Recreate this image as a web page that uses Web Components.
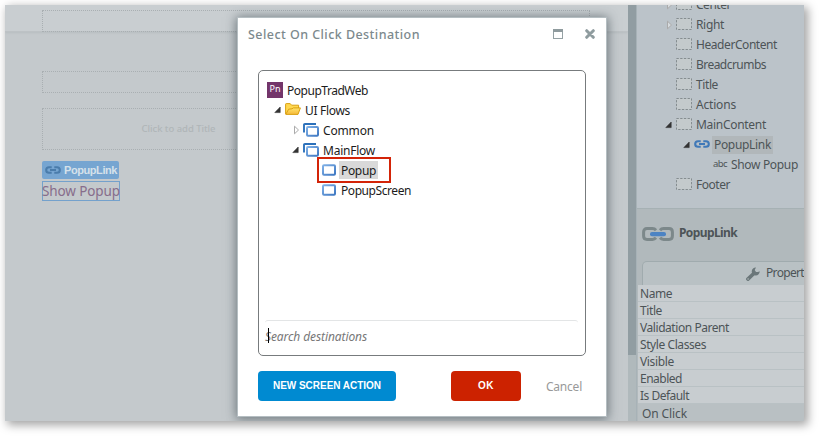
<!DOCTYPE html>
<html lang="en"><head><meta charset="utf-8"><title>Select On Click Destination</title>
<style>html,body{margin:0;background:#fff}body{width:819px;height:436px;overflow:hidden;font-family:"Noto Sans","Open Sans",sans-serif;font-size:12px;color:#1c1c1c}</style></head>
<body><app-shot></app-shot>
<script>
const def=(name,html,after)=>customElements.define(name,class extends HTMLElement{
  constructor(){super();this.attachShadow({mode:'open'})}
  connectedCallback(){this.shadowRoot.innerHTML=typeof html==='function'?html(this):html;if(after)after(this)}
});

/* single line of text tracked to a given width */
def('fit-text','<style>:host{display:inline-block;white-space:pre;line-height:20px;flex:none}span{display:inline-block}</style><span><slot></slot></span>',el=>{
  const s=el.shadowRoot.querySelector('span'),w=+el.getAttribute('w');
  if(w){const n=el.textContent.length;s.style.letterSpacing=((w-s.getBoundingClientRect().width)/n)+'px'}
});

const grad='<defs><linearGradient id="g" x1="0" y1="0" x2="1" y2="1"><stop offset="0" stop-color="#7fb0e6"/><stop offset="1" stop-color="#3f78c2"/></linearGradient><linearGradient id="f" x1="0" y1="0" x2="0" y2="1"><stop offset="0" stop-color="#ffe36b"/><stop offset="1" stop-color="#f6b93a"/></linearGradient></defs>';
const icons={
 open:[8,8,'<path d="M6.2 1v5.6H.8z" fill="#333" stroke="#333" stroke-width=".6"/>'],
 shut:[8,10,'<path d="M2.5 1.2v7.6L6.5 5z" fill="#fff" fill-opacity=".4" stroke="#aaa"/>'],
 folder:[16,12,'<path d="M.6 11V1.2Q.6.6 1.2.6H5.2L6.6 2.2H13.6V5" fill="#ffd84f" stroke="#d9a013"/><path d="M.8 11.4 3.6 6.2 7 5.8 8.4 4.9H15.4L13 11.4Z" fill="url(#f)" stroke="#d9a013"/>'],
 flow:[16,14,'<path d="M1 9.5V2Q1 1 2 1H13" fill="none" stroke="#2c71bb" stroke-width="1.9"/><rect x="4" y="4" width="11" height="8.8" rx="1" fill="#fff" stroke="url(#g)" stroke-width="2"/>'],
 screen:[14,12,'<rect x="1" y="1.2" width="12" height="9.6" rx="1" fill="#fff" stroke="url(#g)" stroke-width="2"/>'],
 holder:[16,12,'<rect x=".5" y=".5" width="15" height="11" fill="#c4cacc" stroke="#858d90" stroke-dasharray="2.3 1.4"/>'],
 link:[16,8,'<path d="M6.7 1.2H4Q1.2 1.2 1.2 4T4 6.8H6.7M9.3 1.2H12Q14.8 1.2 14.8 4T12 6.8H9.3M5 4H11" fill="none" stroke="currentColor" stroke-width="2.1"/>'],
 biglink:[32,14,'<path d="M14 3.2Q12.6 1.6 10.5 1.6H5Q1.6 1.6 1.6 5V9Q1.6 12.4 5 12.4H10.5Q12.6 12.4 14 10.8M18 3.2Q19.4 1.6 21.5 1.6H27Q30.4 1.6 30.4 5V9Q30.4 12.4 27 12.4H21.5Q19.4 12.4 18 10.8" fill="none" stroke="#7c888a" stroke-width="3"/><rect x="8" y="5" width="16" height="4.2" rx="2" fill="#4c83c3"/>'],
 wrench:[14,14,'<path d="M1.9 12.1 8 6.2" stroke="#6b777a" stroke-width="3.6" stroke-linecap="round"/><path d="M13.7 4.2A4 4 0 1 1 10 .4L8.7 3 10 4.9 12 5Z" fill="#6b777a"/><circle cx="2.1" cy="12" r=".7" fill="#b8c0c2"/>'],
 max:[10,10,'<rect x=".5" y=".5" width="9" height="9" fill="#fff" stroke="#95a1a4"/><path d="M0 0H10V3H0Z" fill="#8f9b9e"/>'],
 close:[10,10,'<path d="M1.7 1.7 8.3 8.3M8.3 1.7 1.7 8.3" stroke="#8f9c9f" stroke-width="3" stroke-linecap="round"/>']
};
def('ui-icon',el=>{const [w,h,b]=icons[el.getAttribute('name')];
 return `<style>:host{display:block;flex:none;width:${w}px;height:${h}px}svg{display:block}</style><svg width="${w}" height="${h}" viewBox="0 0 ${w} ${h}">${grad}${b}</svg>`});

/* a tree line: arrow, icon, label */
def('tree-row',el=>{const a=n=>el.getAttribute(n);const icon=a('icon');
 const ic=icon==='pn'?'<b class="pn">Pn</b>':icon==='abc'?'<fit-text class="abc" w="14">abc</fit-text>':`<ui-icon class="ic" name="${icon}"></ui-icon>`;
 return `<style>:host{display:flex;align-items:center;height:20px;padding-left:${a('x')}px}
 .arrow{width:11px;display:flex;align-items:center;justify-content:flex-start}
 .arrow ui-icon{margin-top:-1px}
 .pn{width:16px;height:16px;background:#73356a;color:#fff;font:9px/14px "Noto Sans",sans-serif;text-align:center}
 .abc{font-size:9.5px;line-height:18px;align-self:flex-start}
 .ic{color:#4079b8;margin-top:-2px}
 .ic[name="flow"]{margin-top:-1px}.ic[name="screen"]{margin-top:-1px}
 .lab{margin-left:${a('gap')||4}px;padding:0 2px;margin-right:-2px;height:18px;line-height:18px;${a('sel')?'background:'+a('sel'):''}}
 .lab fit-text{line-height:var(--label-line,19px);vertical-align:top}</style>
 ${a('arrow')!==null?`<span class="arrow"><ui-icon name="${a('arrow')}"></ui-icon></span>`:''}${ic}<span class="lab"><fit-text w="${a('w')}">${a('label')}</fit-text></span>`});

def('drop-zone','<style>:host{display:flex;box-sizing:border-box;border:1px dotted #a9afb2;width:548px;justify-content:center;align-items:center}</style><slot></slot>');

def('page-canvas',`<style>:host{display:flex;flex-direction:column;width:623px;height:416px;background:#c4c9cc;box-sizing:border-box}
header{background:#c9ced1;border-bottom:1px solid #bdc2c5;padding:5px 0 0 37px;height:21px;box-shadow:0 1px 2px #b8bdc0}
main{padding:39px 0 0 37px;display:flex;flex-direction:column;align-items:flex-start}
.h{height:22px}.t{height:42px;margin-top:15px;color:#b0b6b8;font-size:9.5px;padding-right:275px;font-weight:500}
.tag{display:flex;align-items:center;width:77px;height:18px;border-radius:2px;background:#76a5d1;margin-top:11px;color:#d5e1ea;font:bold 11px "Liberation Sans",sans-serif}
.tag ui-icon{color:#4a7cab;margin:0 3px}
.a{height:20px;width:78px;box-sizing:border-box;border:1px solid #74a1cc;margin-top:2px;color:#876d8b;font-size:13.5px;line-height:18px}
.a fit-text{line-height:18px;vertical-align:top;margin-left:-1px}</style>
<header><drop-zone class="h"></drop-zone></header><main><drop-zone class="h"></drop-zone><drop-zone class="t"><fit-text w="74">Click to add Title</fit-text></drop-zone>
<div class="tag"><ui-icon name="link"></ui-icon><fit-text w="53">PopupLink</fit-text></div><div class="a"><fit-text w="78">Show Popup</fit-text></div></main>`);

def('scroll-strip','<style>:host{display:block;width:8px;height:416px;background:#b0b9bc;flex:none}div{height:350px;background:#919da2}</style><div></div>');

def('prop-row',el=>`<style>:host{display:block;height:16px;border-bottom:1px solid #b9c1c4;background:#c8cdd0;padding-left:2px}:host([last]){background:#b9c0c3;padding-left:4px;height:18px;border:0}fit-text{line-height:17px;vertical-align:top}:host([last]) fit-text{line-height:19px}</style><fit-text w="${el.getAttribute('w')}">${el.getAttribute('label')}</fit-text>`);

def('side-panel',`<style>:host{display:block;width:168px;height:416px;overflow:hidden;background:#b1b9bc;color:#4d5457;border-left:1px solid #a7b2b7;box-sizing:border-box;flex:none}
.tree{--label-line:17px;height:203px;background:#bbc3c9;border-bottom:1px solid #a6b1b4;overflow:hidden}.tree tree-row:first-child{margin-top:-10px}
.name{display:flex;align-items:center;height:52px;padding-left:5px;gap:5px;font-weight:700}.name fit-text{margin-top:-4px}.name ui-icon{margin-top:-2px}
.tab{margin-left:5px;width:200px;height:23px;border:1px solid #a0abae;border-bottom:0;border-radius:5px 0 0 0;background:#b9c1c4;display:flex;align-items:center;gap:6px;padding-left:103px}.tab fit-text{margin-top:-2px}
.props{background:#c8cdd0;margin-left:1px}</style>
<div class="tree">
<tree-row x="28" arrow="shut" icon="holder" gap="2" label="Center" w="35"></tree-row>
<tree-row x="28" arrow="shut" icon="holder" gap="2" label="Right" w="28"></tree-row>
<tree-row x="39" icon="holder" gap="2" label="HeaderContent" w="81"></tree-row>
<tree-row x="39" icon="holder" gap="2" label="Breadcrumbs" w="70"></tree-row>
<tree-row x="39" icon="holder" gap="2" label="Title" w="22"></tree-row>
<tree-row x="39" icon="holder" gap="2" label="Actions" w="40"></tree-row>
<tree-row x="28" arrow="open" icon="holder" gap="2" label="MainContent" w="70"></tree-row>
<tree-row x="46" arrow="open" icon="link" gap="2" label="PopupLink" w="57" sel="#b1b7ba"></tree-row>
<tree-row x="76" icon="abc" gap="2" label="Show Popup" w="67"></tree-row>
<tree-row x="39" icon="holder" gap="2" label="Footer" w="34"></tree-row></div>
<div class="name"><ui-icon name="biglink"></ui-icon><fit-text w="58">PopupLink</fit-text></div>
<div class="tab"><ui-icon name="wrench"></ui-icon><fit-text w="38">Propert</fit-text></div>
<div class="props"><prop-row label="Name" w="32"></prop-row><prop-row label="Title" w="22"></prop-row><prop-row label="Validation Parent" w="89"></prop-row><prop-row label="Style Classes" w="66"></prop-row><prop-row label="Visible" w="34"></prop-row><prop-row label="Enabled" w="42"></prop-row><prop-row label="Is Default" w="49"></prop-row><prop-row last label="On Click" w="45"></prop-row></div>`);

def('push-button','<style>:host{display:flex;align-items:center;justify-content:center;height:30px;border-radius:4px;color:#fff;font:bold 10px "Liberation Sans",sans-serif}</style><slot></slot>');

def('select-dialog',`<style>:host{position:absolute;left:232px;top:12px;width:370px;height:400px;box-sizing:border-box;background:#fff;border:1px solid #b5bec2;box-shadow:0 1px 10px 1px rgba(55,68,74,.62);padding:0 20px;display:flex;flex-direction:column}
header{display:flex;align-items:center;height:33px;margin-left:-10px;color:#7c898d;font-weight:500;font-size:12.5px}header ui-icon{margin-top:-1px}header .m{margin-left:133px}header .c{margin-left:22px}
.box{position:relative;margin-top:19px;height:286px;box-sizing:border-box;border:1px solid #777b7d;border-radius:5px;display:flex;flex-direction:column;padding:9px 7px 0 6px;width:328px}
.tree{height:240px}.search{border-top:1px solid #e3e5e6;border-radius:3px;height:30px;position:relative;font-style:italic;color:#777}.search fit-text{line-height:31px}
.search i{position:absolute;left:3px;top:7px;width:1px;height:15px;background:#000}
.mark{position:absolute;left:58px;top:86px;width:70px;height:22px;border:2px solid #d32408}
footer{display:flex;align-items:center;margin-top:15px}.n{width:138px;background:#008ad1}.o{width:70px;margin-left:55px;background:#cc2200}.x{color:#999;margin-left:25px;margin-top:2px}</style>
<header><fit-text w="172">Select On Click Destination</fit-text><ui-icon class="m" name="max"></ui-icon><ui-icon class="c" name="close"></ui-icon></header>
<div class="box"><div class="tree">
<tree-row x="2" icon="pn" gap="2" label="PopupTradWeb" w="81"></tree-row>
<tree-row x="9" arrow="open" icon="folder" gap="2" label="UI Flows" w="45"></tree-row>
<tree-row x="27" arrow="shut" icon="flow" gap="2" label="Common" w="51"></tree-row>
<tree-row x="27" arrow="open" icon="flow" gap="2" label="MainFlow" w="52"></tree-row>
<tree-row x="57" icon="screen" gap="3" label="Popup" w="35" sel="#d9d9d9"></tree-row>
<tree-row x="57" icon="screen" gap="3" label="PopupScreen" w="70"></tree-row></div>
<div class="search"><fit-text w="102">Search destinations</fit-text><i></i></div><div class="mark"></div></div>
<footer><push-button class="n"><fit-text w="108">NEW SCREEN ACTION</fit-text></push-button><push-button class="o"><fit-text w="16">OK</fit-text></push-button><fit-text class="x" w="36">Cancel</fit-text></footer>`);

def('app-shot','<style>:host{display:block;padding:5px}.s{width:799px;height:416px;box-shadow:3px 3px 9px 1px rgba(0,0,0,.36)}.c{position:relative;overflow:hidden;display:flex;height:416px}</style><div class="s"><div class="c"><page-canvas></page-canvas><scroll-strip></scroll-strip><side-panel></side-panel><select-dialog></select-dialog></div></div>');
</script></body></html>
